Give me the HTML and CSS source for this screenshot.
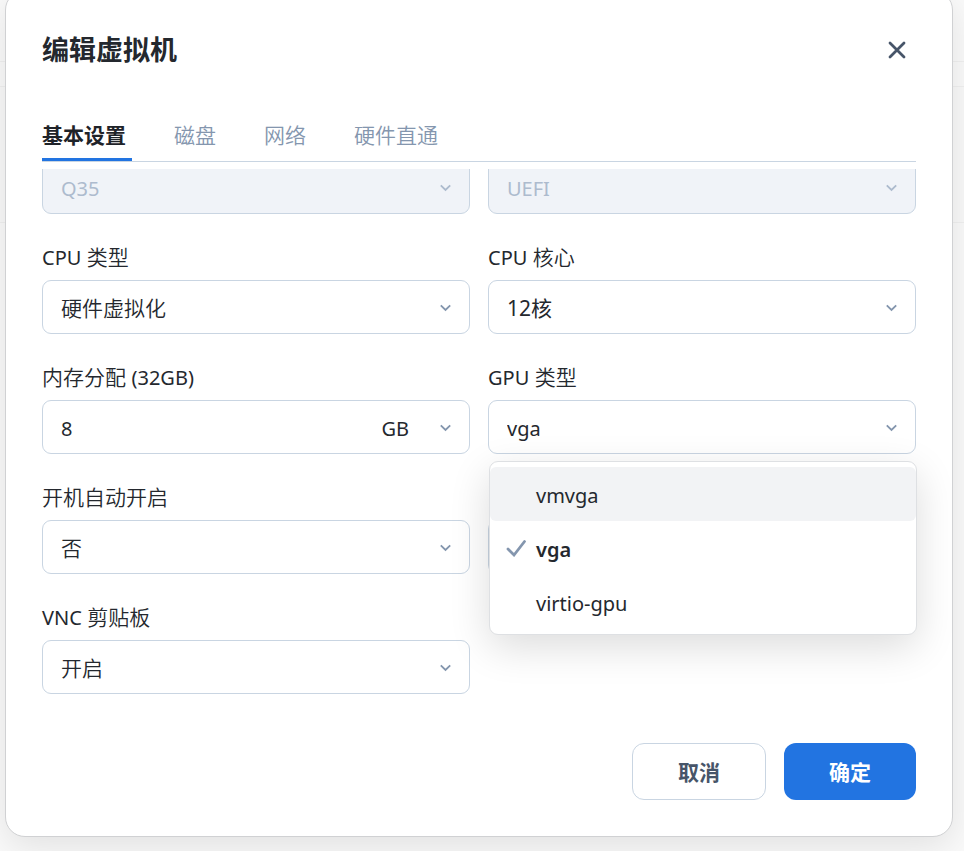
FILE: index.html
```html
<!DOCTYPE html>
<html lang="zh-CN">
<head>
    <meta charset="UTF-8">
    <meta name="viewport" content="width=device-width, initial-scale=1.0">
    <title>编辑虚拟机</title>
    <link rel="stylesheet" href="styles.css">
</head>
<body>
    <svg width="0" height="0" class="symbols" aria-hidden="true">
        <symbol id="chevron" viewBox="0 0 12 8">
            <path d="M0.8 1.3 L5.5 6 L10.2 1.3" fill="none" stroke="currentColor" stroke-width="1.8"/>
        </symbol>
    </svg>

    <!-- Page behind the dialog -->
    <div class="backdrop">
        <div class="backdrop-bar"></div>
        <div class="backdrop-gap"></div>
        <div class="backdrop-list"></div>
    </div>

    <form class="modal" role="dialog" aria-labelledby="modal-title">
        <header class="modal-header">
            <h1 id="modal-title">编辑虚拟机</h1>
            <button type="button" class="close" aria-label="关闭">
                <svg width="18" height="18" viewBox="0 0 18 18">
                    <path d="M2 2 L16 16 M16 2 L2 16" fill="none" stroke="currentColor" stroke-width="2.8" stroke-linecap="round"/>
                </svg>
            </button>
        </header>

        <nav class="tabs">
            <a href="#basic" class="active">基本设置</a>
            <a href="#disk">磁盘</a>
            <a href="#network">网络</a>
            <a href="#passthrough">硬件直通</a>
        </nav>

        <div class="modal-body">
            <div class="fields">
                <div class="control">
                    <select class="latin" aria-label="Q35" disabled><option>Q35</option></select>
                    <svg class="chevron"><use href="#chevron"/></svg>
                </div>
                <div class="control">
                    <select class="latin" aria-label="UEFI" disabled><option>UEFI</option></select>
                    <svg class="chevron"><use href="#chevron"/></svg>
                </div>

                <div class="field">
                    <label for="cpu-type"><span class="latin">CPU</span> 类型</label>
                    <div class="control">
                        <select id="cpu-type"><option>硬件虚拟化</option></select>
                        <svg class="chevron"><use href="#chevron"/></svg>
                    </div>
                </div>
                <div class="field">
                    <label for="cpu-cores"><span class="latin">CPU</span> 核心</label>
                    <div class="control">
                        <select id="cpu-cores" class="mixed"><option>12核</option></select>
                        <svg class="chevron"><use href="#chevron"/></svg>
                    </div>
                </div>

                <div class="field">
                    <label for="memory">内存分配 <span class="latin">(32GB)</span></label>
                    <div class="control">
                        <input type="text" id="memory" class="latin" value="8">
                        <span class="unit">GB</span>
                        <svg class="chevron"><use href="#chevron"/></svg>
                    </div>
                </div>
                <div class="field">
                    <label for="gpu"><span class="latin">GPU</span> 类型</label>
                    <div class="control">
                        <select id="gpu" class="latin"><option>vga</option></select>
                        <svg class="chevron"><use href="#chevron"/></svg>
                        <ul class="menu" role="listbox">
                            <li role="option" class="hover">vmvga</li>
                            <li role="option" class="selected" aria-selected="true">
                                <svg width="20" height="18" viewBox="0 0 20 18">
                                    <path d="M2 10 L8 16 L18.5 2.5" fill="none" stroke="currentColor" stroke-width="2.8" stroke-linecap="round"/>
                                </svg>
                                vga
                            </li>
                            <li role="option">virtio-gpu</li>
                        </ul>
                    </div>
                </div>

                <div class="field">
                    <label for="autostart">开机自动开启</label>
                    <div class="control">
                        <select id="autostart"><option>否</option></select>
                        <svg class="chevron"><use href="#chevron"/></svg>
                    </div>
                </div>
                <div class="field under-menu">
                    <div class="control"><select></select></div>
                </div>

                <div class="field">
                    <label for="clipboard"><span class="latin">VNC</span> 剪贴板</label>
                    <div class="control">
                        <select id="clipboard"><option>开启</option></select>
                        <svg class="chevron"><use href="#chevron"/></svg>
                    </div>
                </div>
            </div>
        </div>

        <footer class="modal-footer">
            <button type="button" class="btn">取消</button>
            <button type="submit" class="btn btn-primary">确定</button>
        </footer>
    </form>
</body>
</html>
```
FILE: styles.css
```css
* {
    box-sizing: border-box;
}
body {
    display: grid;
    margin: 0;
    min-height: 100vh;
    overflow: hidden;
    background: #fafafa;
    color: #24282e;
    font: 350 21px/30px "Noto Sans", "Noto Sans CJK SC", sans-serif;
}
.symbols {
    position: absolute;
}

/* Page behind the dialog */
.backdrop,
.modal {
    grid-area: 1 / 1;
}
.backdrop-bar {
    height: 62px;
    border-bottom: 1px solid #f0f0f0;
}
.backdrop-gap {
    height: 25px;
    border-bottom: 1px solid #f0f0f0;
}
.backdrop-list {
    height: 136px;
    border-bottom: 1px solid #f0f0f0;
    background: #f9f9f9;
}

/* Dialog */
.modal {
    z-index: 1;
    align-self: start;
    margin: -10px 11px 0 5px;
    padding: 36px;
    background: #fff;
    border: 1px solid #d0d1d3;
    border-radius: 20px;
    box-shadow: 0 10px 36px rgba(0, 0, 0, 0.1);
}
.modal-header {
    display: flex;
    justify-content: space-between;
    align-items: center;
    height: 46px;
}
h1 {
    margin: 0;
    font-size: 27px;
    line-height: 38px;
    font-weight: 700;
}
.close {
    display: flex;
    padding: 10px;
    border: 0;
    background: none;
    color: #475569;
}

/* Tabs */
.tabs {
    display: flex;
    gap: 42px;
    margin-top: 42px;
    border-bottom: 1px solid #c9d5e2;
}
.tabs a {
    padding: 5px 6px 8px 0;
    border-bottom: 3px solid transparent;
    color: #8496ae;
    text-decoration: none;
}
.tabs .active {
    border-color: #2274e1;
    color: #1f2329;
    font-weight: 700;
}

/* Scrolled form, cut off under the tabs */
.modal-body {
    margin-top: 7px;
    clip-path: inset(0 -36px -60px);
}
.fields {
    display: grid;
    grid-template-columns: 1fr 1fr;
    gap: 28px 18px;
    margin-top: -9px;
}
.modal-body::before {
    content: "";
    display: table;
}
.field {
    display: flex;
    flex-direction: column;
    gap: 8px;
}
.under-menu {
    justify-content: flex-end;
}
.control {
    position: relative;
}
select,
input {
    display: block;
    width: 100%;
    height: 54px;
    padding: 2px 18px 0;
    border: 1px solid #c9d5e2;
    border-radius: 9px;
    background: #fff;
    color: #24282e;
    font: inherit;
    appearance: none;
}
.latin,
.unit,
.menu {
    font-size: 20px;
    font-weight: 400;
}
.mixed {
    font-weight: 400;
}
label .latin {
    line-height: 20px;
}
.control .latin {
    padding-top: 3px;
}
select:disabled {
    background: #f0f3f8;
    color: #adbbce;
    opacity: 1;
}
.chevron {
    position: absolute;
    top: 24px;
    right: 18px;
    width: 12px;
    height: 8px;
    color: #8496ae;
}
select:disabled + .chevron {
    color: #adbbce;
}
.unit {
    position: absolute;
    top: 14px;
    right: 61px;
}

/* Open drop-down */
.menu {
    position: absolute;
    z-index: 2;
    top: 61px;
    left: 1px;
    right: -1px;
    margin: 0;
    padding: 5px 0;
    list-style: none;
    background: #fff;
    border: 1px solid #dee0e3;
    border-radius: 9px;
    box-shadow: 0 12px 40px rgba(0, 0, 0, 0.14);
}
.menu li {
    position: relative;
    padding: 14px 46px 10px;
}
.menu .hover {
    border-radius: 6px;
    background: #f2f3f5;
}
.menu .selected {
    font-weight: 600;
}
.menu svg {
    position: absolute;
    top: 18px;
    left: 16px;
    color: #8496ae;
}

/* Buttons */
.modal-footer {
    display: flex;
    justify-content: flex-end;
    gap: 18px;
    margin-top: 49px;
}
.btn {
    height: 57px;
    padding: 0 45px;
    border: 1px solid #c9d5e2;
    border-radius: 12px;
    background: #fff;
    color: #475569;
    font: inherit;
    font-weight: 700;
}
.btn-primary {
    border: 0;
    background: #2274e1;
    color: #fff;
}
```
